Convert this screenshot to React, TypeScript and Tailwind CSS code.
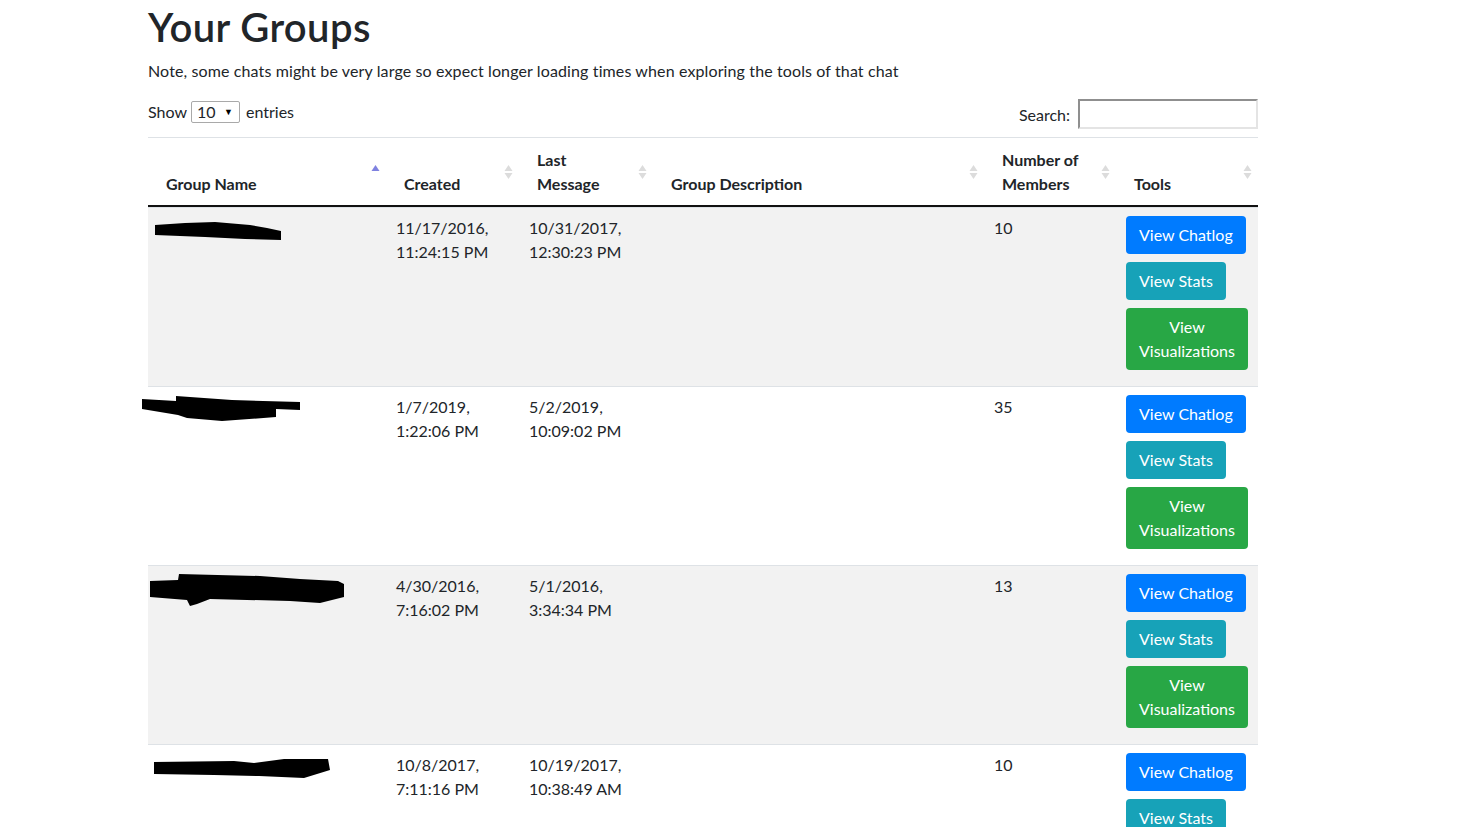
import React from "react";

const FONT = { fontFamily: "Lato, 'Open Sans', sans-serif" };

function SortIcon({ asc }: { asc?: boolean }) {
  return (
    <svg
      width="19"
      height="19"
      viewBox="0 0 19 19"
      className="absolute right-[1px] top-1/2 -translate-y-1/2"
    >
      {asc ? (
        <polygon points="5.5,8.5 9.5,2.5 13.5,8.5" fill="#7f82e0" />
      ) : (
        <>
          <polygon points="5.5,8.5 9.5,2.5 13.5,8.5" fill="#dcdcdc" />
          <polygon points="5.5,10.5 13.5,10.5 9.5,16.5" fill="#dcdcdc" />
        </>
      )}
    </svg>
  );
}

type Row = {
  created: [string, string];
  last: [string, string];
  members: string;
  blob: { path: string; left: number; top: number; w: number; h: number };
};

const rows: Row[] = [
  {
    created: ["11/17/2016,", "11:24:15 PM"],
    last: ["10/31/2017,", "12:30:23 PM"],
    members: "10",
    blob: {
      left: 7,
      top: 14,
      w: 128,
      h: 20,
      path: "M0,3 L30,1 L60,0 L95,3 L112,6 L126,9 L126,18 L90,17 L50,15 L0,13 Z",
    },
  },
  {
    created: ["1/7/2019,", "1:22:06 PM"],
    last: ["5/2/2019,", "10:09:02 PM"],
    members: "35",
    blob: {
      left: -6,
      top: 9,
      w: 160,
      h: 27,
      path: "M0,3 L34,5 L34,0 L90,4 L158,6 L158,14 L134,13 L134,21 L80,25 L45,22 L36,19 L0,13 Z",
    },
  },
  {
    created: ["4/30/2016,", "7:16:02 PM"],
    last: ["5/1/2016,", "3:34:34 PM"],
    members: "13",
    blob: {
      left: 2,
      top: 7,
      w: 196,
      h: 34,
      path: "M0,8 L28,7 L29,1 L110,3 L150,6 L188,8 L194,11 L194,24 L170,30 L140,28 L60,26 L47,31 L40,33 L37,27 L0,24 Z",
    },
  },
  {
    created: ["10/8/2017,", "7:11:16 PM"],
    last: ["10/19/2017,", "10:38:49 AM"],
    members: "10",
    blob: {
      left: 6,
      top: 13,
      w: 180,
      h: 22,
      path: "M0,4 L80,3 L100,5 L130,1 L174,1 L176,12 L150,20 L105,18 L60,17 L0,16 Z",
    },
  },
];

function Btn({ color, children }: { color: string; children: React.ReactNode }) {
  return (
    <button
      className={`${color} text-white text-[16px] leading-[24px] px-[12px] py-[6px] rounded-[4px] border border-transparent mb-[8px] text-center`}
      style={FONT}
    >
      {children}
    </button>
  );
}

export default function App() {
  return (
    <div className="bg-white min-h-screen text-[#212529]" style={FONT}>
      <div className="ml-[148px] w-[1110px] pt-[3px]">
        <h1 className="text-[40px] leading-[48px] font-semibold mb-[8px] tracking-[0.4px]">Your Groups</h1>
        <p className="text-[16px] leading-[24px] mb-[16px] tracking-[0.12px]">
          Note, some chats might be very large so expect longer loading times when exploring the tools of that chat
        </p>
        <div className="flex items-start justify-between h-[30px]">
          <div className="flex items-center text-[16px] leading-[24px] pt-[1px]">
            <span>Show</span>
            <div className="ml-[4px] mr-[6px] w-[49px] h-[22px] border border-[#a9a9a9] rounded-[2px] flex items-center justify-between pl-[5px] pr-[6px]">
              <span className="text-[16px]">10</span>
              <span className="text-[9px] text-black">▼</span>
            </div>
            <span>entries</span>
          </div>
          <div className="flex items-center text-[16px] leading-[24px]">
            <span className="mr-[8px] pt-[2px]">Search:</span>
            <div className="w-[180px] h-[30px] border-2 border-t-[#8f8f8f] border-l-[#8f8f8f] border-r-[#e4e4e4] border-b-[#e4e4e4] bg-white" />
          </div>
        </div>
        <table className="mt-[8px] w-[1110px] table-fixed border-separate border-spacing-0 text-[16px] leading-[24px]">
          <colgroup>
            <col className="w-[238px]" />
            <col className="w-[133px]" />
            <col className="w-[134px]" />
            <col className="w-[331px]" />
            <col className="w-[132px]" />
            <col className="w-[142px]" />
          </colgroup>
          <thead>
            <tr>
              {[
                { t: <>Group Name</>, asc: true },
                { t: <>Created</> },
                { t: <>Last<br />Message</> },
                { t: <>Group Description</> },
                { t: <>Number of<br />Members</> },
                { t: <>Tools</> },
              ].map((h, i) => (
                <th
                  key={i}
                  className="relative text-left align-bottom font-bold border-t border-[#dee2e6] border-b-2 border-b-[#111] pt-[10px] pb-[9px] pl-[18px] pr-[30px]"
                >
                  {h.t}
                  <SortIcon asc={h.asc} />
                </th>
              ))}
            </tr>
          </thead>
          <tbody>
            {rows.map((r, i) => {
              const bg = i % 2 === 0 ? "bg-[#f2f2f2]" : "bg-white";
              const td = `align-top border-t border-[#dee2e6] px-[10px] pt-[8px] pb-[8px] ${bg}`;
              return (
                <tr key={i}>
                  <td className={`${td} relative`}>
                    <svg
                      width={r.blob.w}
                      height={r.blob.h}
                      viewBox={`0 0 ${r.blob.w} ${r.blob.h}`}
                      className="absolute"
                      style={{ left: r.blob.left, top: r.blob.top }}
                    >
                      <path d={r.blob.path} fill="#000" />
                    </svg>
                  </td>
                  <td className={td}>
                    {r.created[0]}
                    <br />
                    {r.created[1]}
                  </td>
                  <td className={td}>
                    {r.last[0]}
                    <br />
                    {r.last[1]}
                  </td>
                  <td className={td}></td>
                  <td className={td}>{r.members}</td>
                  <td className={td}>
                    <div className="flex flex-col items-start">
                      <Btn color="bg-[#007bff]">View Chatlog</Btn>
                      <Btn color="bg-[#17a2b8]">View Stats</Btn>
                      <Btn color="bg-[#28a745]">View Visualizations</Btn>
                    </div>
                  </td>
                </tr>
              );
            })}
          </tbody>
        </table>
      </div>
    </div>
  );
}
